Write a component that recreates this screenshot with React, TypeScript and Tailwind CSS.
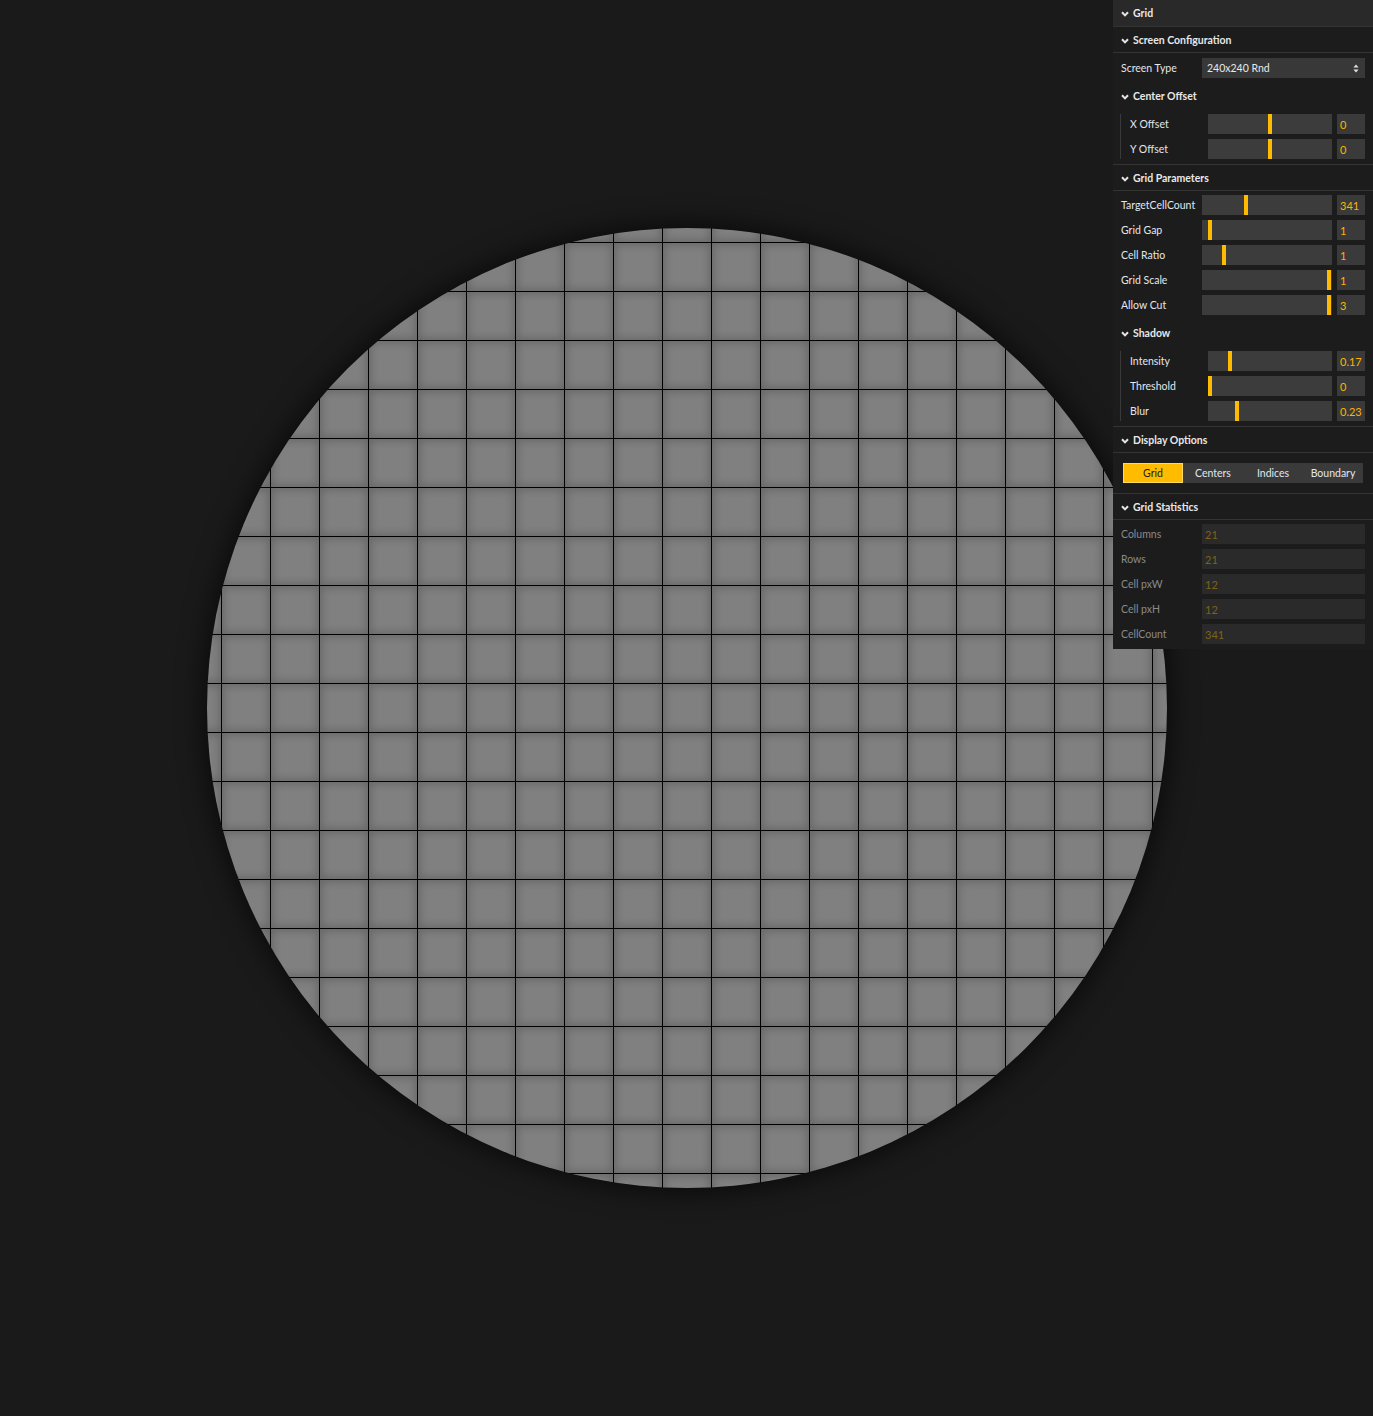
import React from 'react';

const font = { fontFamily: 'Lato, "Segoe UI", "Noto Sans", sans-serif' };

function Chevron() {
  return (
    <svg width="8" height="6" viewBox="0 0 8 6" className="shrink-0">
      <path d="M1 1.2 L4 4.4 L7 1.2" fill="none" stroke="#e6e6e6" strokeWidth="2" />
    </svg>
  );
}

function Header({ title, border = true }: { title: string; border?: boolean }) {
  return (
    <div
      className={
        border
          ? 'h-[26px] flex items-center gap-[4px] pl-2 pt-[2px] border-b border-[#333333] text-[10.5px] font-bold text-[#e8e8e8]'
          : 'h-[25px] flex items-center gap-[4px] pl-2 pt-[2px] text-[10.5px] font-bold text-[#e8e8e8]'
      }
    >
      <Chevron />
      <span>{title}</span>
    </div>
  );
}

function Slider({ label, value, knob, indent }: { label: string; value: string; knob: number; indent?: boolean }) {
  return (
    <div className="h-5 flex items-center mb-[5px]">
      <span className={indent ? 'w-[78px] pt-[2px] text-[10.5px] text-[#e2e6ee]' : 'w-[81px] pt-[2px] text-[10.5px] text-[#e2e6ee]'}>
        {label}
      </span>
      <div className="relative flex-1 h-5 bg-[#3c3c3c]">
        <div className="absolute top-0 h-5 w-1 bg-[#ffbb00]" style={{ left: knob }} />
      </div>
      <div className="ml-[5px] w-[28px] h-5 bg-[#3a3a3a] pl-[3px] pt-[2px] flex items-center text-[11px] text-[#ffb300]">{value}</div>
    </div>
  );
}

function Stat({ label, value }: { label: string; value: string }) {
  return (
    <div className="h-5 flex items-center mb-[5px]">
      <span className="w-[81px] pt-[2px] text-[10.5px] text-[#8a8a8a]">{label}</span>
      <div className="flex-1 h-5 bg-[#2a2a2a] pl-[3px] pt-[2px] flex items-center text-[11px] text-[#7c6318]">{value}</div>
    </div>
  );
}

function Panel() {
  return (
    <div className="absolute top-0 right-0 w-[260px] bg-[#1c1c1c]" style={font}>
      <div className="h-[26px] flex items-center gap-[4px] pl-2 pt-[2px] bg-[#292929] text-[10.5px] font-bold text-[#e8e8e8]">
        <Chevron />
        <span>Grid</span>
      </div>

      <div className="border-t border-[#333333]">
        <Header title="Screen Configuration" />
        <div className="pt-[5px] pb-[5px] px-2">
          <div className="h-5 flex items-center mb-[5px]">
            <span className="w-[81px] pt-[2px] text-[10.5px] text-[#e2e6ee]">Screen Type</span>
            <div className="flex-1 h-5 bg-[#383838] pl-[5px] pr-[6px] flex items-center justify-between text-[10.5px] text-[#e8e8e8]">
              <span className="pt-[2px]">240x240 Rnd</span>
              <svg width="6" height="9" viewBox="0 0 6 9">
                <path d="M3 0.5 L5.6 3.6 H0.4 Z M3 8.5 L5.6 5.4 H0.4 Z" fill="#e0e0e0" />
              </svg>
            </div>
          </div>
          <div className="-ml-2">
            <Header title="Center Offset" border={false} />
          </div>
          <div className="pt-[6px]">
            <div className="ml-[-1px] border-l border-[#3a3a3a] pl-[9px]">
              <Slider label="X Offset" value="0" knob={60} indent />
              <div className="-mb-[5px]">
                <Slider label="Y Offset" value="0" knob={60} indent />
              </div>
            </div>
          </div>
        </div>
      </div>

      <div className="border-t border-[#333333]">
        <Header title="Grid Parameters" />
        <div className="pt-[4px] pb-[5px] px-2">
          <Slider label="TargetCellCount" value="341" knob={42} />
          <Slider label="Grid Gap" value="1" knob={6} />
          <Slider label="Cell Ratio" value="1" knob={20} />
          <Slider label="Grid Scale" value="1" knob={125} />
          <Slider label="Allow Cut" value="3" knob={125} />
          <div className="-ml-2">
            <Header title="Shadow" border={false} />
          </div>
          <div className="pt-[6px]">
            <div className="ml-[-1px] border-l border-[#3a3a3a] pl-[9px]">
              <Slider label="Intensity" value="0.17" knob={20} indent />
              <Slider label="Threshold" value="0" knob={0} indent />
              <div className="-mb-[5px]">
                <Slider label="Blur" value="0.23" knob={27} indent />
              </div>
            </div>
          </div>
        </div>
      </div>

      <div className="border-t border-[#333333]">
        <Header title="Display Options" />
        <div className="pt-[10px] pb-[10px] px-[10px]">
          <div className="flex h-5 bg-[#3a3a3a] text-[10.5px]">
            <div className="w-[60px] pt-[2px] flex items-center justify-center bg-[#ffbb00] border border-[#ffd866] text-[#1a1a1a]">Grid</div>
            <div className="w-[60px] pt-[2px] flex items-center justify-center text-[#e2e6ee]">Centers</div>
            <div className="w-[60px] pt-[2px] flex items-center justify-center text-[#e2e6ee]">Indices</div>
            <div className="w-[60px] pt-[2px] flex items-center justify-center text-[#e2e6ee]">Boundary</div>
          </div>
        </div>
      </div>

      <div className="border-t border-[#333333]">
        <Header title="Grid Statistics" />
        <div className="pt-[4px] px-2">
          <Stat label="Columns" value="21" />
          <Stat label="Rows" value="21" />
          <Stat label="Cell pxW" value="12" />
          <Stat label="Cell pxH" value="12" />
          <Stat label="CellCount" value="341" />
        </div>
      </div>
    </div>
  );
}

export default function App() {
  const cells = Array.from({ length: 21 * 21 });
  return (
    <div className="relative min-h-[1416px] bg-[#1a1a1a] flex items-center justify-center overflow-hidden">
      <div className="w-[960px] h-[960px] rounded-full overflow-hidden bg-black shadow-[0_0_24px_6px_rgba(0,0,0,0.55)] flex items-center justify-center">
        <div className="shrink-0 grid grid-cols-[repeat(21,48px)] gap-px">
          {cells.map((_, i) => (
            <div key={i} className="w-12 h-12 bg-[#808080] shadow-[inset_0_0_8px_2px_rgba(0,0,0,0.2)]" />
          ))}
        </div>
      </div>
      <Panel />
    </div>
  );
}
